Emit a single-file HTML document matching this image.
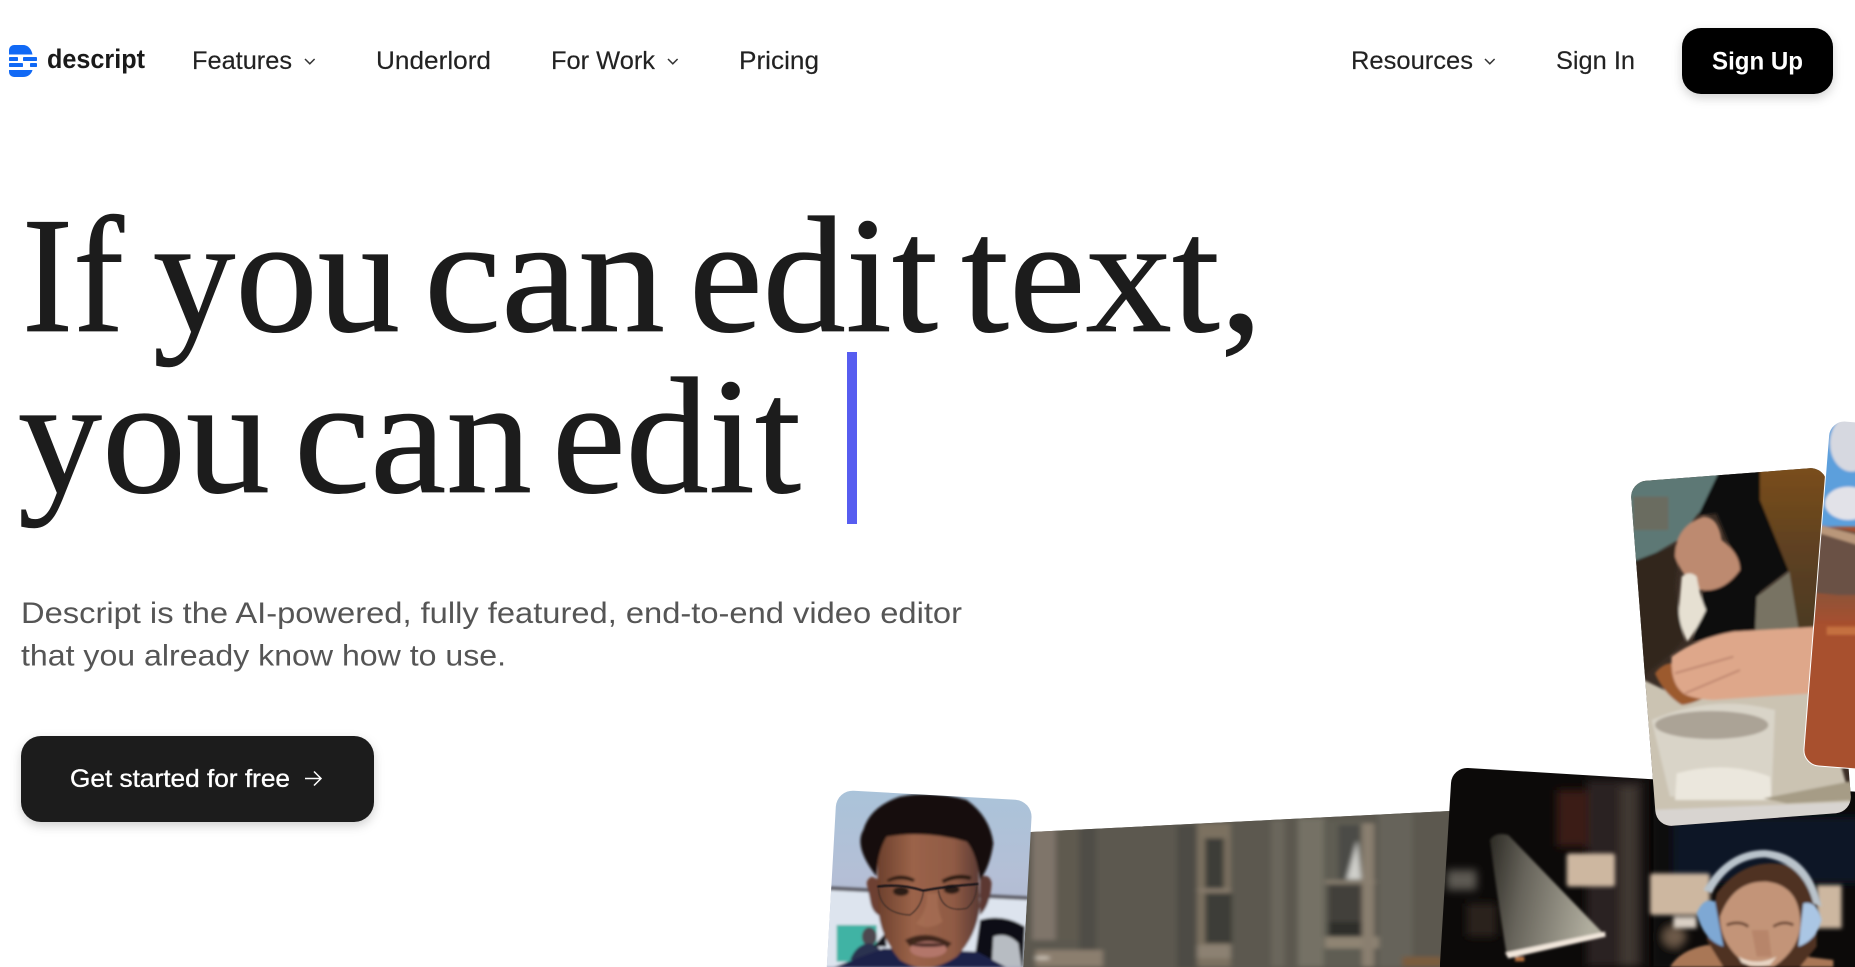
<!DOCTYPE html>
<html lang="en"><head><meta charset="utf-8"><title>Descript</title>
<style>
html,body{margin:0;padding:0;background:#fff;width:1855px;height:967px;overflow:hidden}
svg{display:block;position:absolute;left:0;top:0}
.n{font-family:"Liberation Sans",Arial,sans-serif;font-size:25px;fill:#222;stroke:#222;stroke-width:.15}
.h{font-family:"Liberation Serif","Times New Roman",serif;font-size:166px;fill:#1c1c1c;stroke:#1c1c1c;stroke-width:.8}
.s{font-family:"Liberation Sans",Arial,sans-serif;font-size:30px;fill:#555}
</style></head><body>
<svg width="1855" height="967" viewBox="0 0 1855 967" xmlns="http://www.w3.org/2000/svg">
<defs>
<filter id="b1" x="-5%" y="-5%" width="110%" height="110%"><feGaussianBlur stdDeviation="4"/></filter>
<filter id="b0" x="-5%" y="-5%" width="110%" height="110%"><feGaussianBlur stdDeviation="2"/></filter>
<filter id="b2" x="-5%" y="-5%" width="110%" height="110%"><feGaussianBlur stdDeviation="13"/></filter>
<filter id="b4" x="-5%" y="-5%" width="110%" height="110%"><feGaussianBlur stdDeviation="6"/></filter>
<filter id="b3" x="-5%" y="-5%" width="110%" height="110%"><feGaussianBlur stdDeviation="4 6"/></filter>
<filter id="sh" x="-10%" y="-20%" width="120%" height="150%"><feDropShadow dx="0" dy="4" stdDeviation="5" flood-color="#000" flood-opacity=".18"/></filter>
<clipPath id="cPerson"><rect x="-98" y="-172" width="196" height="350" rx="17" transform="translate(925,967) rotate(3.2)"/></clipPath>
<clipPath id="cMid"><polygon points="1000,833.6 1470,810 1470,967 1000,967"/></clipPath>
<clipPath id="cLamp"><rect x="0" y="0" width="520" height="320" rx="16" transform="translate(1452,767) rotate(3.5)"/></clipPath>
<clipPath id="cCook"><rect x="-98" y="-173" width="196" height="346" rx="16" transform="translate(1741,647) rotate(-4.4)"/></clipPath>
<clipPath id="cCanyon"><rect x="-98" y="-173" width="196" height="346" rx="16" transform="translate(1914,600) rotate(4.5)"/></clipPath>
<linearGradient id="gSky" x1="0" y1="0" x2="0" y2="1"><stop offset="0" stop-color="#a9c4da"/><stop offset=".5" stop-color="#b4bfd6"/><stop offset="1" stop-color="#adb2c6"/></linearGradient>
<linearGradient id="gFace" x1="0" y1="0" x2="1" y2="0"><stop offset="0" stop-color="#6b3f2c"/><stop offset=".35" stop-color="#9b6349"/><stop offset=".75" stop-color="#8f5a44"/><stop offset="1" stop-color="#5a3a34"/></linearGradient>
<linearGradient id="gApron" x1="0" y1="0" x2="0" y2="1"><stop offset="0" stop-color="#7d4f1e"/><stop offset=".55" stop-color="#5d4020"/><stop offset="1" stop-color="#4b3a22"/></linearGradient>
<linearGradient id="gGround" x1="0" y1="0" x2="0" y2="1"><stop offset="0" stop-color="#8f5238"/><stop offset="1" stop-color="#a8502e"/></linearGradient>
<linearGradient id="gShade" x1="0" y1="0" x2="1" y2=".2"><stop offset="0" stop-color="#2c2a24"/><stop offset=".35" stop-color="#66635a"/><stop offset="1" stop-color="#b1ae9f"/></linearGradient>
</defs>

<!-- middle card -->
<g clip-path="url(#cMid)"><rect x="1000" y="800" width="480" height="170" fill="#5b5850"/><g transform="translate(800,760) scale(.673,.3333)" filter="url(#b3)">
<rect x="250" y="130" width="750" height="500" fill="#5b5850"/>
<rect x="345" y="200" width="35" height="340" fill="#7f756a"/>
<rect x="380" y="200" width="35" height="340" fill="#5f5a50"/>
<rect x="415" y="200" width="25" height="420" fill="#4f4d46"/>
<rect x="560" y="195" width="35" height="430" fill="#4d4c45"/>
<rect x="590" y="190" width="50" height="430" fill="#7b7161"/>
<rect x="602" y="235" width="28" height="150" fill="#3d3d38"/>
<rect x="602" y="400" width="40" height="150" fill="#3e3e39"/>
<rect x="590" y="385" width="50" height="12" fill="#85796b"/>
<rect x="590" y="555" width="50" height="40" fill="#8c8172"/>
<rect x="700" y="180" width="20" height="440" fill="#6a665b"/>
<rect x="740" y="175" width="40" height="445" fill="#757165"/>
<rect x="778" y="185" width="60" height="435" fill="#5f5d53"/>
<rect x="800" y="195" width="32" height="165" fill="#4b4c47"/>
<polygon points="812,358 828,240 834,358" fill="#cfcfca"/>
<rect x="780" y="360" width="75" height="12" fill="#857b6d"/>
<rect x="785" y="375" width="50" height="110" fill="#423f3a"/>
<rect x="785" y="485" width="50" height="45" fill="#2f2f2c"/>
<rect x="780" y="530" width="80" height="35" fill="#8f8473"/>
<rect x="835" y="190" width="18" height="430" fill="#8a7f70"/>
<rect x="860" y="160" width="50" height="460" fill="#66645a"/>
<rect x="350" y="570" width="100" height="50" fill="#8b7e6e"/>
<rect x="350" y="590" width="20" height="8" fill="#d8d0c4"/>
<rect x="895" y="590" width="60" height="30" fill="#7a5c3c"/>
</g></g>

<!-- person card -->
<g clip-path="url(#cPerson)">
<rect x="820" y="780" width="220" height="190" fill="url(#gSky)"/>
<g transform="translate(830,780) scale(.33333)">
<g filter="url(#b1)">
<polygon points="-20,325 620,358 620,560 -20,560" fill="#dde4ee"/>
<polygon points="-20,318 620,350 620,362 -20,330" fill="#5f5f68"/>
<rect x="20" y="435" width="120" height="110" fill="#3fb3a4"/>
<ellipse cx="118" cy="470" rx="22" ry="28" fill="#4d4750"/>
<path d="M60 540 Q80 490 120 490 Q150 495 170 540 Z" fill="#2b3050"/>
<path d="M430 560 L450 420 Q520 400 585 440 L580 560 Z" fill="#0e1114"/>
<path d="M490 470 Q530 455 565 490 L575 560 L485 560 Z" fill="#b7bcc2"/>
<path d="M130 500 L165 460 L170 500 Z" fill="#15171a"/>
<path d="M10 562 L160 505 L440 515 L530 562 Z" fill="#1e2448"/>
<path d="M112 320 Q105 300 125 290 L150 300 L155 410 Q125 400 120 360 Z" fill="#6d4030"/>
<path d="M450 290 Q480 280 485 310 Q480 380 450 405 Z" fill="#5b3832"/>
<path d="M140 150 Q280 100 440 150 L450 380 Q440 470 380 530 Q290 590 210 540 Q150 470 145 390 Z" fill="url(#gFace)"/>
<path d="M140 290 Q70 200 100 150 Q120 80 210 50 Q310 30 410 60 Q480 110 490 190 Q480 260 450 300 Q440 220 410 185 Q290 150 170 170 Q140 220 140 290 Z" fill="#14100e"/>
<path d="M170 300 Q210 275 255 298 L250 306 Q210 290 175 306 Z" fill="#24150f"/>
<path d="M335 300 Q380 275 425 290 L420 300 Q380 290 340 310 Z" fill="#24150f"/>
<ellipse cx="213" cy="334" rx="24" ry="14" fill="#2a1a15"/>
<ellipse cx="365" cy="328" rx="24" ry="14" fill="#2a1a15"/>
<path d="M290 340 Q295 390 258 430 Q295 455 338 425 Q318 380 325 340 Z" fill="#a87056" opacity=".7"/>
<path d="M225 480 Q290 445 365 490 L350 505 Q290 470 240 500 Z" fill="#2b1a14" opacity=".8"/>
<ellipse cx="295" cy="508" rx="55" ry="24" fill="#b3766a"/>
<ellipse cx="295" cy="495" rx="48" ry="6" fill="#4a2c26"/>
</g>
<g filter="url(#b0)">
<path d="M142 320 Q210 310 280 332 Q340 320 445 312" fill="none" stroke="#101014" stroke-width="6"/>
<path d="M145 325 Q150 400 240 405 Q275 380 280 335 M325 330 Q335 400 410 385 Q440 360 440 318" fill="none" stroke="#3a2a26" stroke-width="3"/>
</g>
</g></g>

<!-- lamp card -->
<g clip-path="url(#cLamp)">
<rect x="1440" y="760" width="420" height="210" fill="#0c0a09"/>
<g transform="translate(1440,760) scale(.33333)">
<g filter="url(#b2)">
<rect x="440" y="60" width="170" height="560" fill="#2a2320"/>
<rect x="350" y="90" width="95" height="170" fill="#3a1a18"/>
<rect x="540" y="80" width="50" height="540" fill="#3f3730"/>
<rect x="640" y="60" width="80" height="560" fill="#0b0a09"/>
<rect x="700" y="170" width="560" height="200" fill="#071625"/>
<ellipse cx="705" cy="530" rx="35" ry="30" fill="#6d5a48"/>
<rect x="20" y="330" width="90" height="60" fill="#5d5a52"/>
<rect x="80" y="430" width="90" height="100" fill="#2a241f"/>
</g>
<g filter="url(#b4)">
<rect x="380" y="280" width="145" height="100" rx="8" fill="#cdb7a0"/>
<rect x="630" y="340" width="180" height="125" rx="8" fill="#cdb7a0"/>
<rect x="1130" y="375" width="75" height="130" fill="#cdb7a0"/>
<rect x="700" y="470" width="70" height="35" fill="#d9cfc4"/>
</g>
<g filter="url(#b1)">
<path d="M150 240 Q165 215 205 225 L470 500 L490 520 L200 585 Q170 400 150 240 Z" fill="url(#gShade)"/>
<path d="M195 578 L495 515 L497 530 L205 595 Z" fill="#f2e7dc"/>
<rect x="225" y="590" width="28" height="14" fill="#b5703e"/>
<path d="M690 621 Q720 570 800 555 L850 560 L1180 600 L1180 621 Z" fill="#a97756"/>
<path d="M830 400 Q920 280 1060 320 Q1130 370 1130 460 L1130 560 L1080 621 L850 621 L800 540 Z" fill="#4f3220"/>
<path d="M840 470 Q880 360 980 365 Q1070 375 1080 470 Q1090 560 1000 621 L930 621 Q840 560 840 470 Z" fill="#c39478"/>
<path d="M935 510 L950 590 L995 590 L985 510 Z" fill="#a06a52" opacity=".35"/>
<path d="M895 590 Q950 620 1010 590 L990 615 Q940 625 905 608 Z" fill="#e9d7c6"/>
<path d="M860 495 Q900 480 925 500 M1000 500 Q1030 480 1060 495" fill="none" stroke="#6b4634" stroke-width="8"/>
<path d="M790 390 Q860 270 975 270 Q1110 280 1145 440 L1120 430 Q1090 310 975 292 Q870 295 815 400 Z" fill="#b9c3cb"/>
<path d="M770 460 Q790 410 825 425 L850 560 Q790 540 770 460 Z" fill="#7ea8d4"/>
<path d="M1090 430 Q1130 420 1145 480 Q1130 540 1075 560 Z" fill="#aac6e4"/>
</g></g></g>

<!-- cooking card -->
<g clip-path="url(#cCook)">
<rect x="1620" y="460" width="240" height="380" fill="#3a2d25"/>
<g transform="translate(1600,400) scale(.33333)"><g filter="url(#b1)">
<polygon points="60,250 365,205 340,300 295,340 235,420 85,505" fill="#5d7875"/>
<rect x="100" y="290" width="105" height="100" fill="#6a6c60"/>
<polygon points="85,490 240,430 225,560 250,720 215,760 165,800 120,835" fill="#33261d"/>
<polygon points="362,205 485,195 480,300 565,510 480,575 470,695 280,725 310,575 420,510 350,340 295,345" fill="#100d0b"/>
<polygon points="480,190 700,175 675,695 595,695 565,510 480,300" fill="url(#gApron)"/>
<polygon points="470,590 568,515 597,695 465,697" fill="#787364"/>
<path d="M225 470 Q225 380 310 350 Q355 350 365 420 Q420 460 420 510 Q370 580 300 570 Q245 530 225 470 Z" fill="#bd8a70"/>
<path d="M245 530 Q270 510 290 530 Q300 590 318 630 Q290 690 262 725 Q230 660 238 610 Z" fill="#e6e0d2"/>
<polygon points="110,830 215,880 660,870 780,1300 150,1300" fill="#cbc3b2"/>
<path d="M165 820 Q190 785 230 790 L380 850 Q300 910 245 915 Q190 880 165 820 Z" fill="#9c5a2e"/>
<path d="M215 770 Q290 715 400 695 L660 680 L640 880 Q480 890 340 900 Q270 895 250 880 Q210 850 215 770 Z" fill="#dea78a"/>
<path d="M225 820 L400 770 M255 880 L420 810" stroke="#b9806a" stroke-width="5" fill="none"/>
<path d="M155 960 Q340 880 525 930 L515 1180 L210 1190 Z" fill="#d9d4c8"/>
<ellipse cx="335" cy="975" rx="170" ry="42" fill="#aba396"/>
<path d="M230 1120 Q380 1080 510 1130 L515 1200 L225 1200 Z" fill="#ebe7dd"/>
<polygon points="490,1195 770,1140 775,1200 560,1210" fill="#a69c86"/>
<polygon points="150,1230 780,1205 780,1300 200,1300" fill="#d8d4d0"/>
</g></g></g>

<!-- canyon card -->
<g clip-path="url(#cCanyon)">
<rect x="1790" y="400" width="70" height="380" fill="#a8502e"/>
<g transform="translate(1600,400) scale(.33333)"><g filter="url(#b1)">
<rect x="620" y="50" width="170" height="330" fill="#5b9fdc"/>
<ellipse cx="755" cy="130" rx="65" ry="85" fill="#d6d8e0"/>
<ellipse cx="745" cy="310" rx="70" ry="50" fill="#e2e2e8"/>
<polygon points="660,375 790,400 790,590 640,580" fill="#6b5144"/>
<polygon points="660,375 790,410 790,440 660,400" fill="#b9977a"/>
<rect x="600" y="585" width="190" height="90" fill="url(#gGround)"/>
<rect x="680" y="680" width="110" height="25" fill="#c4703f"/>
</g></g></g>
<rect x="-98" y="-173" width="196" height="346" rx="16" transform="translate(1914,600) rotate(4.5)" fill="none" stroke="#fff" stroke-width="1"/>

<!-- nav -->
<g fill="#1169f5">
<path d="M9 54.5V50a5 5 0 0 1 5-5h9c5 0 8.500 4 9.500 9.500Z"/>
<rect x="9" y="57" width="9" height="4" rx=".8"/><rect x="23" y="57" width="14" height="4" rx=".8"/>
<rect x="9" y="63" width="14" height="4" rx=".8"/><rect x="30" y="63" width="7" height="4" rx=".8"/>
<path d="M9 70h23.500C31.500 74 28 77 23 77h-9a5 5 0 0 1-5-5Z"/>
</g>
<text x="47" y="68" font-family="Liberation Sans,sans-serif" font-weight="700" font-size="26.500" fill="#1a1a1a" textLength="98" lengthAdjust="spacingAndGlyphs">descript</text>
<text class="n" x="192" y="69" textLength="100" lengthAdjust="spacingAndGlyphs">Features</text>
<text class="n" x="376" y="69" textLength="115" lengthAdjust="spacingAndGlyphs">Underlord</text>
<text class="n" x="551" y="69" textLength="104" lengthAdjust="spacingAndGlyphs">For Work</text>
<text class="n" x="739" y="69" textLength="80" lengthAdjust="spacingAndGlyphs">Pricing</text>
<text class="n" x="1351" y="69" textLength="122" lengthAdjust="spacingAndGlyphs">Resources</text>
<text class="n" x="1556" y="69" textLength="79" lengthAdjust="spacingAndGlyphs">Sign In</text>
<path d="M305 59l4.800 4.800 4.800-4.800M668 59l4.800 4.800 4.800-4.800M1485 59l4.800 4.800 4.800-4.800" fill="none" stroke="#333" stroke-width="1.500"/>
<rect x="1682" y="28" width="151" height="66" rx="19" fill="#000" filter="url(#sh)"/>
<text x="1712" y="69.500" font-family="Liberation Sans,sans-serif" font-size="25" font-weight="700" fill="#fff" textLength="91" lengthAdjust="spacingAndGlyphs">Sign Up</text>

<!-- headline -->
<text class="h" x="22" y="331" textLength="102" lengthAdjust="spacingAndGlyphs">If</text>
<text class="h" x="153" y="331" textLength="247" lengthAdjust="spacingAndGlyphs">you</text>
<text class="h" x="424" y="331" textLength="241" lengthAdjust="spacingAndGlyphs">can</text>
<text class="h" x="689" y="331" textLength="249" lengthAdjust="spacingAndGlyphs">edit</text>
<text class="h" x="961" y="331" textLength="302" lengthAdjust="spacingAndGlyphs">text,</text>
<text class="h" x="18" y="492" textLength="252" lengthAdjust="spacingAndGlyphs">you</text>
<text class="h" x="294" y="492" textLength="238" lengthAdjust="spacingAndGlyphs">can</text>
<text class="h" x="552" y="492" textLength="249" lengthAdjust="spacingAndGlyphs">edit</text>
<rect x="847" y="352" width="10" height="172" fill="#575df0"/>

<!-- sub -->
<text class="s" x="21" y="623" textLength="941" lengthAdjust="spacingAndGlyphs">Descript is the AI-powered, fully featured, end-to-end video editor</text>
<text class="s" x="21" y="665.500" textLength="485" lengthAdjust="spacingAndGlyphs">that you already know how to use.</text>

<!-- cta -->
<rect x="21" y="736" width="353" height="86" rx="20" fill="#1a1a1a" filter="url(#sh)"/>
<text x="70" y="787" font-family="Liberation Sans,sans-serif" font-size="25" fill="#fff" stroke="#fff" stroke-width=".35" textLength="220" lengthAdjust="spacingAndGlyphs">Get started for free</text>
<path d="M305 778.500h16M314 771.500l7 7-7 7" fill="none" stroke="#fff" stroke-width="1.500"/>
</svg>
</body></html>
